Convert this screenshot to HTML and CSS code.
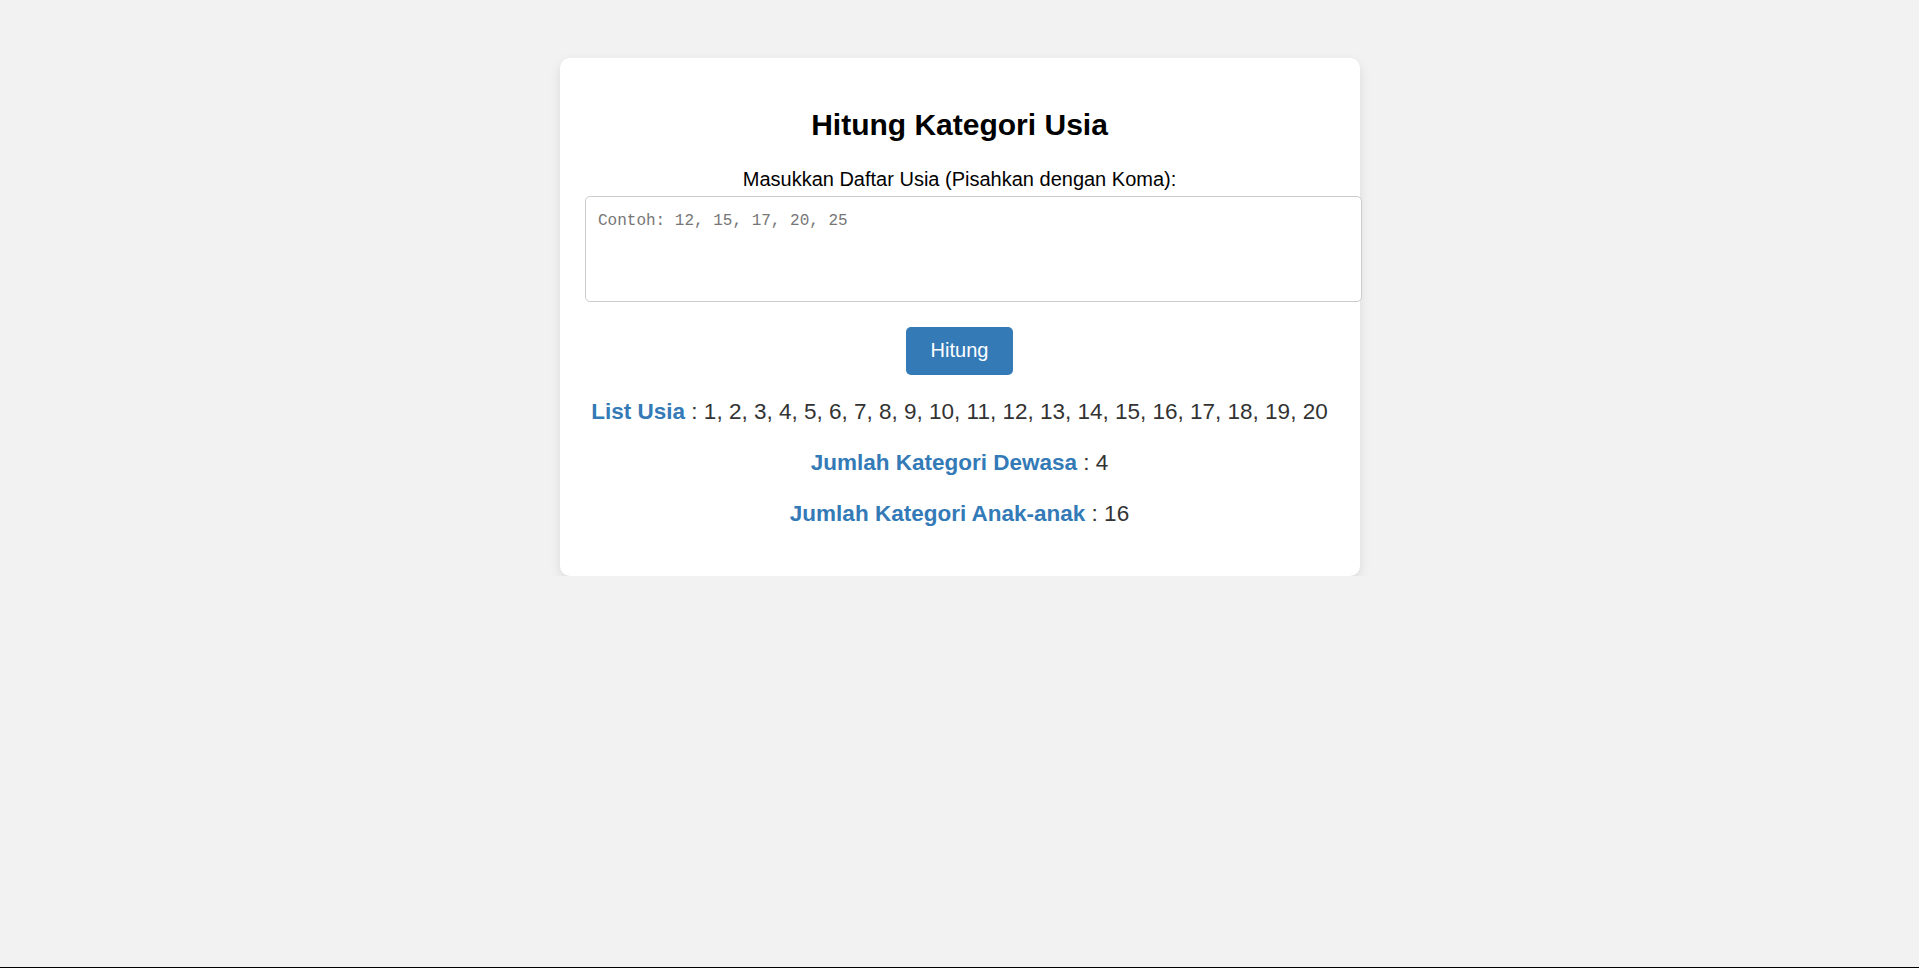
FILE: index.html
```html
<!DOCTYPE html>
<html lang="id">
<head>
<meta charset="utf-8">
<title>Hitung Kategori Usia</title>
<link rel="stylesheet" href="styles.css">
</head>
<body>
<div class="card">
  <h2 class="title">Hitung Kategori Usia</h2>
  <label class="label" for="usia">Masukkan Daftar Usia (Pisahkan dengan Koma):</label>
  <textarea id="usia" class="input" placeholder="Contoh: 12, 15, 17, 20, 25"></textarea>
  <div class="actions"><button class="btn" type="button">Hitung</button></div>
  <div class="result">
    <p class="row"><strong class="key">List Usia</strong> : 1, 2, 3, 4, 5, 6, 7, 8, 9, 10, 11, 12, 13, 14, 15, 16, 17, 18, 19, 20</p>
    <p class="row"><strong class="key">Jumlah Kategori Dewasa</strong> : 4</p>
    <p class="row"><strong class="key">Jumlah Kategori Anak-anak</strong> : 16</p>
  </div>
</div>
</body>
</html>
```
FILE: styles.css
```css
html {
  height: 100%;
  box-sizing: border-box;
  border-bottom: 1px solid #000;
}
body {
  margin: 0;
  padding-top: 58px;
  background: #f2f2f2;
  font-family: "Liberation Sans", Arial, sans-serif;
}
.card {
  width: 750px;
  margin: 0 auto;
  padding: 25px;
  background: #fff;
  border-radius: 10px;
  box-shadow: 0 4px 12px rgba(0, 0, 0, 0.1);
  text-align: center;
}
.title {
  margin: 25px 0;
  font-size: 30px;
  font-weight: bold;
  color: #000;
  line-height: 34.5px;
}
.label {
  display: block;
  font-size: 20px;
  line-height: 23px;
  color: #000;
}
.input {
  display: block;
  width: 750px;
  height: 80px;
  margin: 5px 0 0;
  padding: 14px 12.5px 10px;
  border: 1px solid #ccc;
  border-radius: 5px;
  font-family: "Liberation Mono", monospace;
  font-size: 16px;
  line-height: 20px;
  resize: none;
  outline: none;
  background: #fff;
}
.input::placeholder {
  color: #767676;
}
.actions {
  margin-top: 25px;
  height: 48px;
}
.btn {
  height: 48px;
  padding: 0 25px;
  border: none;
  border-radius: 5px;
  background: #337ab7;
  color: #fff;
  font-family: "Liberation Sans", Arial, sans-serif;
  font-size: 20px;
  cursor: pointer;
}
.result {
  color: #333;
}
.row {
  margin: 25px 0;
  font-size: 22.5px;
  line-height: 26px;
}
.row:first-child {
  margin-top: 24.5px;
}
.row:last-child {
  margin-bottom: 24px;
}
.key {
  color: #337ab7;
}
```
